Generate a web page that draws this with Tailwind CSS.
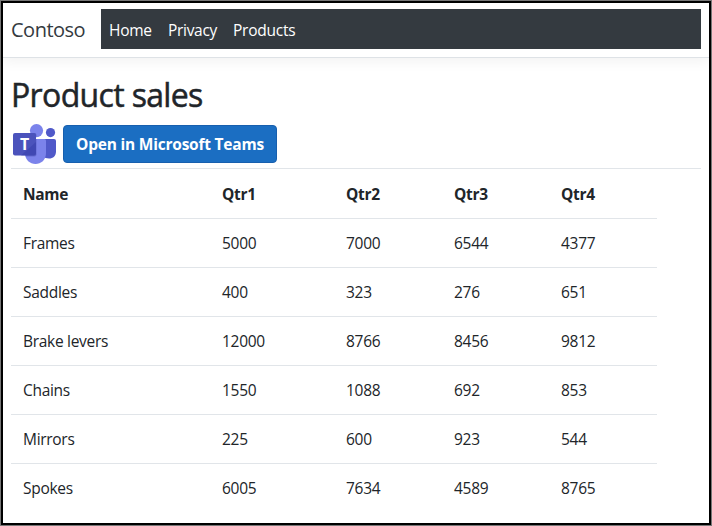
<!DOCTYPE html>
<html lang="en">
<head>
<meta charset="utf-8">
<title>Product sales - Contoso</title>
<script src="https://cdn.jsdelivr.net/npm/@tailwindcss/browser@4"></script>
</head>
<body class="h-[526px] w-[712px] overflow-hidden border border-[#777] bg-white font-['Open_Sans','Noto_Sans',sans-serif] text-[15.5px] tracking-[-0.3px] text-[#212529]">
<div class="h-full border-2 border-black">
  <header class="flex h-[55px] border-b border-[#dee2e6] pt-1.5 pr-2 pl-2 shadow-[0_4px_12px_rgba(0,0,0,0.05)]">
    <a class="w-[90px] text-[20px] leading-[41px] tracking-[-0.5px] text-[#343a40]">Contoso</a>
    <nav class="flex h-10 flex-1 bg-[#343a40] pl-2 leading-[42px] text-white">
      <a class="w-[59px]">Home</a>
      <a class="w-[65px]">Privacy</a>
      <a class="tracking-[-0.25px]">Products</a>
    </nav>
  </header>
  <main class="px-2">
    <h1 class="mt-4 h-[50px] text-[32px] leading-[42px] font-medium tracking-[-0.65px] [-webkit-text-stroke:0.5px_#212529]">Product sales</h1>
    <div class="flex h-[45px] border-b border-[#e1e5e9]">
      <svg class="mr-[7px] h-[42px] w-[45px] shrink-0" viewBox="0 0 45 42">
        <circle cx="39.5" cy="8.600" r="4.600" fill="#5059c9"/>
        <path d="M32 15h11q2 0 2 2v10.500c0 4.500-3 7-7 7q-4 0-6-2z" fill="#5059c9"/>
        <circle cx="25.500" cy="6.600" r="6.600" fill="#7b83eb"/>
        <path d="M14 15h19.500q1.500 0 1.500 1.500V29c0 7-5 11-10.500 11S14 36 14 29z" fill="#7b83eb"/>
        <path d="M14 15h11.500v15.500q0 2-2 2H14.500z" fill="#4248a8" opacity=".4"/>
        <path d="M19 9h4.500q2 0 2 2v2h-6.500z" fill="#4248a8" opacity=".4"/>
        <rect x="2" y="9" width="23" height="22.500" rx="2" fill="#4b53bc"/>
        <path d="M25 18v11.500q0 2-2 2H10z" fill="#3940ab" opacity=".55"/>
        <text x="13.500" y="26" text-anchor="middle" font-family="Open Sans" font-size="16" font-weight="700" fill="#fff">T</text>
      </svg>
      <button class="mt-px h-[38px] w-[214px] rounded-[4px] border border-[#175fae] bg-[#1b6ec2] pt-0.5 font-bold tracking-[-0.22px] whitespace-nowrap text-white">Open in Microsoft Teams</button>
    </div>
    <table class="w-[646px] table-fixed border-collapse text-left [&_td]:h-[49px] [&_td]:p-0 [&_td]:pt-0.5 [&_td]:pl-3 [&_th]:h-[49px] [&_th]:p-0 [&_th]:pt-0.5 [&_th]:pl-3 [&_tr]:border-b [&_tr]:border-[#e1e5e9] [&_tr:last-child]:border-0">
      <colgroup><col class="w-[199px]"><col class="w-[124px]"><col class="w-[108px]"><col class="w-[107px]"><col></colgroup>
      <thead><tr><th>Name</th><th>Qtr1</th><th>Qtr2</th><th>Qtr3</th><th>Qtr4</th></tr></thead>
      <tbody class="[&_tr:first-child]:border-t">
        <tr><td>Frames</td><td>5000</td><td>7000</td><td>6544</td><td>4377</td></tr>
        <tr><td>Saddles</td><td>400</td><td>323</td><td>276</td><td>651</td></tr>
        <tr><td>Brake levers</td><td>12000</td><td>8766</td><td>8456</td><td>9812</td></tr>
        <tr><td>Chains</td><td>1550</td><td>1088</td><td>692</td><td>853</td></tr>
        <tr><td>Mirrors</td><td>225</td><td>600</td><td>923</td><td>544</td></tr>
        <tr><td>Spokes</td><td>6005</td><td>7634</td><td>4589</td><td>8765</td></tr>
      </tbody>
    </table>
  </main>
</div>
</body>
</html>
